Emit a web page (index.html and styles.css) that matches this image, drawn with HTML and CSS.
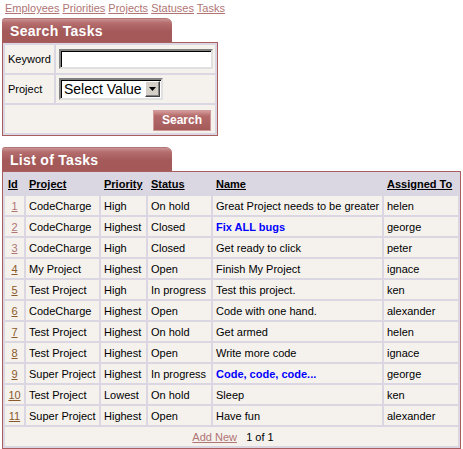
FILE: index.html
```html
<!DOCTYPE html>
<html>
<head>
<meta charset="utf-8">
<link rel="stylesheet" href="styles.css">
</head>
<body>
<div class="nav">
  <a href="#">Employees</a> <a href="#">Priorities</a> <a href="#">Projects</a> <a href="#">Statuses</a> <a href="#">Tasks</a>
</div>

<div class="panel search-panel">
  <div class="tab-row"><div class="tab">Search Tasks</div><div class="tab-rest"></div></div>
  <div class="box">
    <table class="grid form">
      <colgroup><col class="c-label"><col></colgroup>
      <tr><td>Keyword</td><td><div class="input"></div></td></tr>
      <tr><td>Project</td><td><div class="select"><span class="sel-text">Select Value</span><span class="sel-btn"><svg width="7" height="4" viewBox="0 0 7 4"><path d="M0 0h7L3.5 4z" fill="#000"/></svg></span></div></td></tr>
      <tr><td colspan="2" class="right"><span class="btn">Search</span></td></tr>
    </table>
  </div>
</div>

<div class="panel list-panel">
  <div class="tab-row"><div class="tab">List of Tasks</div><div class="tab-rest"></div></div>
  <div class="box">
    <table class="grid tasks">
      <colgroup><col class="c-id"><col class="c-proj"><col class="c-pri"><col class="c-stat"><col class="c-name"><col></colgroup>
      <tr class="head"><th>Id</th><th>Project</th><th>Priority</th><th>Status</th><th>Name</th><th>Assigned To</th></tr>
      <tr><td class="id"><a class="l1" href="#">1</a></td><td>CodeCharge</td><td>High</td><td>On hold</td><td>Great Project needs to be greater</td><td>helen</td></tr>
      <tr><td class="id"><a class="l1" href="#">2</a></td><td>CodeCharge</td><td>Highest</td><td>Closed</td><td class="hot">Fix ALL bugs</td><td>george</td></tr>
      <tr><td class="id"><a class="l1" href="#">3</a></td><td>CodeCharge</td><td>High</td><td>Closed</td><td>Get ready to click</td><td>peter</td></tr>
      <tr><td class="id"><a class="l2" href="#">4</a></td><td>My Project</td><td>Highest</td><td>Open</td><td>Finish My Project</td><td>ignace</td></tr>
      <tr><td class="id"><a class="l2" href="#">5</a></td><td>Test Project</td><td>High</td><td>In progress</td><td>Test this project.</td><td>ken</td></tr>
      <tr><td class="id"><a class="l2" href="#">6</a></td><td>CodeCharge</td><td>Highest</td><td>Open</td><td>Code with one hand.</td><td>alexander</td></tr>
      <tr><td class="id"><a class="l2" href="#">7</a></td><td>Test Project</td><td>Highest</td><td>On hold</td><td>Get armed</td><td>helen</td></tr>
      <tr><td class="id"><a class="l2" href="#">8</a></td><td>Test Project</td><td>Highest</td><td>Open</td><td>Write more code</td><td>ignace</td></tr>
      <tr><td class="id"><a class="l2" href="#">9</a></td><td>Super Project</td><td>Highest</td><td>In progress</td><td class="hot">Code, code, code...</td><td>george</td></tr>
      <tr><td class="id"><a class="l2" href="#">10</a></td><td>Test Project</td><td>Lowest</td><td>On hold</td><td>Sleep</td><td>ken</td></tr>
      <tr><td class="id"><a class="l2" href="#">11</a></td><td>Super Project</td><td>Highest</td><td>Open</td><td>Have fun</td><td>alexander</td></tr>
      <tr><td colspan="6" class="footer"><a class="l1" href="#">Add New</a>&nbsp;&nbsp; 1 of 1</td></tr>
    </table>
  </div>
</div>
</body>
</html>
```
FILE: styles.css
```css
body {
  margin: 0;
  padding: 0 2px;
  background: #fff;
  font-family: "Liberation Sans", Arial, sans-serif;
  font-size: 11px;
  color: #000;
}
a { color: #b07575; text-decoration: underline; }
a.l2 { color: #8a5a2a; }

.nav {
  padding: 2px 0 0 3px;
  height: 14px;
  font-size: 11px;
  line-height: 13px;
}

.panel { margin-top: 2px; }
.list-panel { margin-top: 11px; }

.tab-row { display: flex; align-items: flex-end; }
.tab {
  width: 162px;
  height: 23px;
  padding-left: 8px;
  color: #fff;
  font-weight: bold;
  font-size: 14px;
  line-height: 24px;
  letter-spacing: 0.3px;
  border-radius: 3px 6px 0 0;
  background: linear-gradient(#c99393 0px, #b56d6d 4px, #a55a5a 12px, #a45858 23px);
  border-top: 1px solid #b37575;
}
.tab-rest { flex: 1; }

.search-panel .box { width: 212px; }
.list-panel .box { width: 455px; }

.box {
  border: 2px solid #a85e5e;
  background: #f5f2ee;
}

.grid {
  border-collapse: separate;
  border-spacing: 2px;
  background: #dad7e3;
  table-layout: fixed;
  margin: -1px 0 -1px -1px;
  width: calc(100% + 2px);
}
.grid td, .grid th {
  background: #f5f2ee;
  padding: 0 0 0 3px;
  text-align: left;
  white-space: nowrap;
  overflow: hidden;
}
.form td { height: 28px; }
.c-label { width: 49px; }
.right { text-align: right !important; padding-right: 4px !important; }

.input {
  width: 150px;
  height: 16px;
  border: 2px solid;
  border-color: #808080 #e0e0e0 #e0e0e0 #808080;
  box-shadow: inset 1px 1px 0 #000;
  background: #fff;
}
.select {
  display: flex;
  align-items: center;
  width: 100px;
  height: 18px;
  border: 2px solid;
  border-color: #808080 #e0e0e0 #e0e0e0 #808080;
  box-shadow: inset 1px 1px 0 #000;
  background: #fff;
  font-size: 14px;
}
.sel-text { flex: 1; padding-left: 3px; line-height: 18px; }
.sel-btn {
  width: 13px;
  height: 14px;
  margin-right: 1px;
  display: flex;
  align-items: center;
  justify-content: center;
  background: #d4d0c8;
  border: 1px solid;
  border-color: #fff #404040 #404040 #fff;
  box-shadow: inset -1px -1px 0 #808080;
}
.btn {
  display: inline-block;
  width: 56px;
  height: 19px;
  line-height: 19px;
  text-align: center;
  color: #fff;
  font-weight: bold;
  font-size: 12px;
  border: 1px solid #cf9a9a;
  background: linear-gradient(#d49a9a 0px, #b46a6a 5px, #a55a5a 19px);
  margin-top: 3px;
}

.tasks th, .tasks td { height: 19px; }
.tasks tr.head th {
  background: #dad7e3;
  font-weight: bold;
  text-decoration: underline;
  height: 20px;
}
.c-id { width: 19px; }
.c-proj { width: 73px; }
.c-pri { width: 45px; }
.c-stat { width: 63px; }
.c-name { width: 169px; }
.tasks td.id { text-align: center; padding: 0; }
.hot { color: #0000ff; font-weight: bold; }
.footer { text-align: center !important; }
```
